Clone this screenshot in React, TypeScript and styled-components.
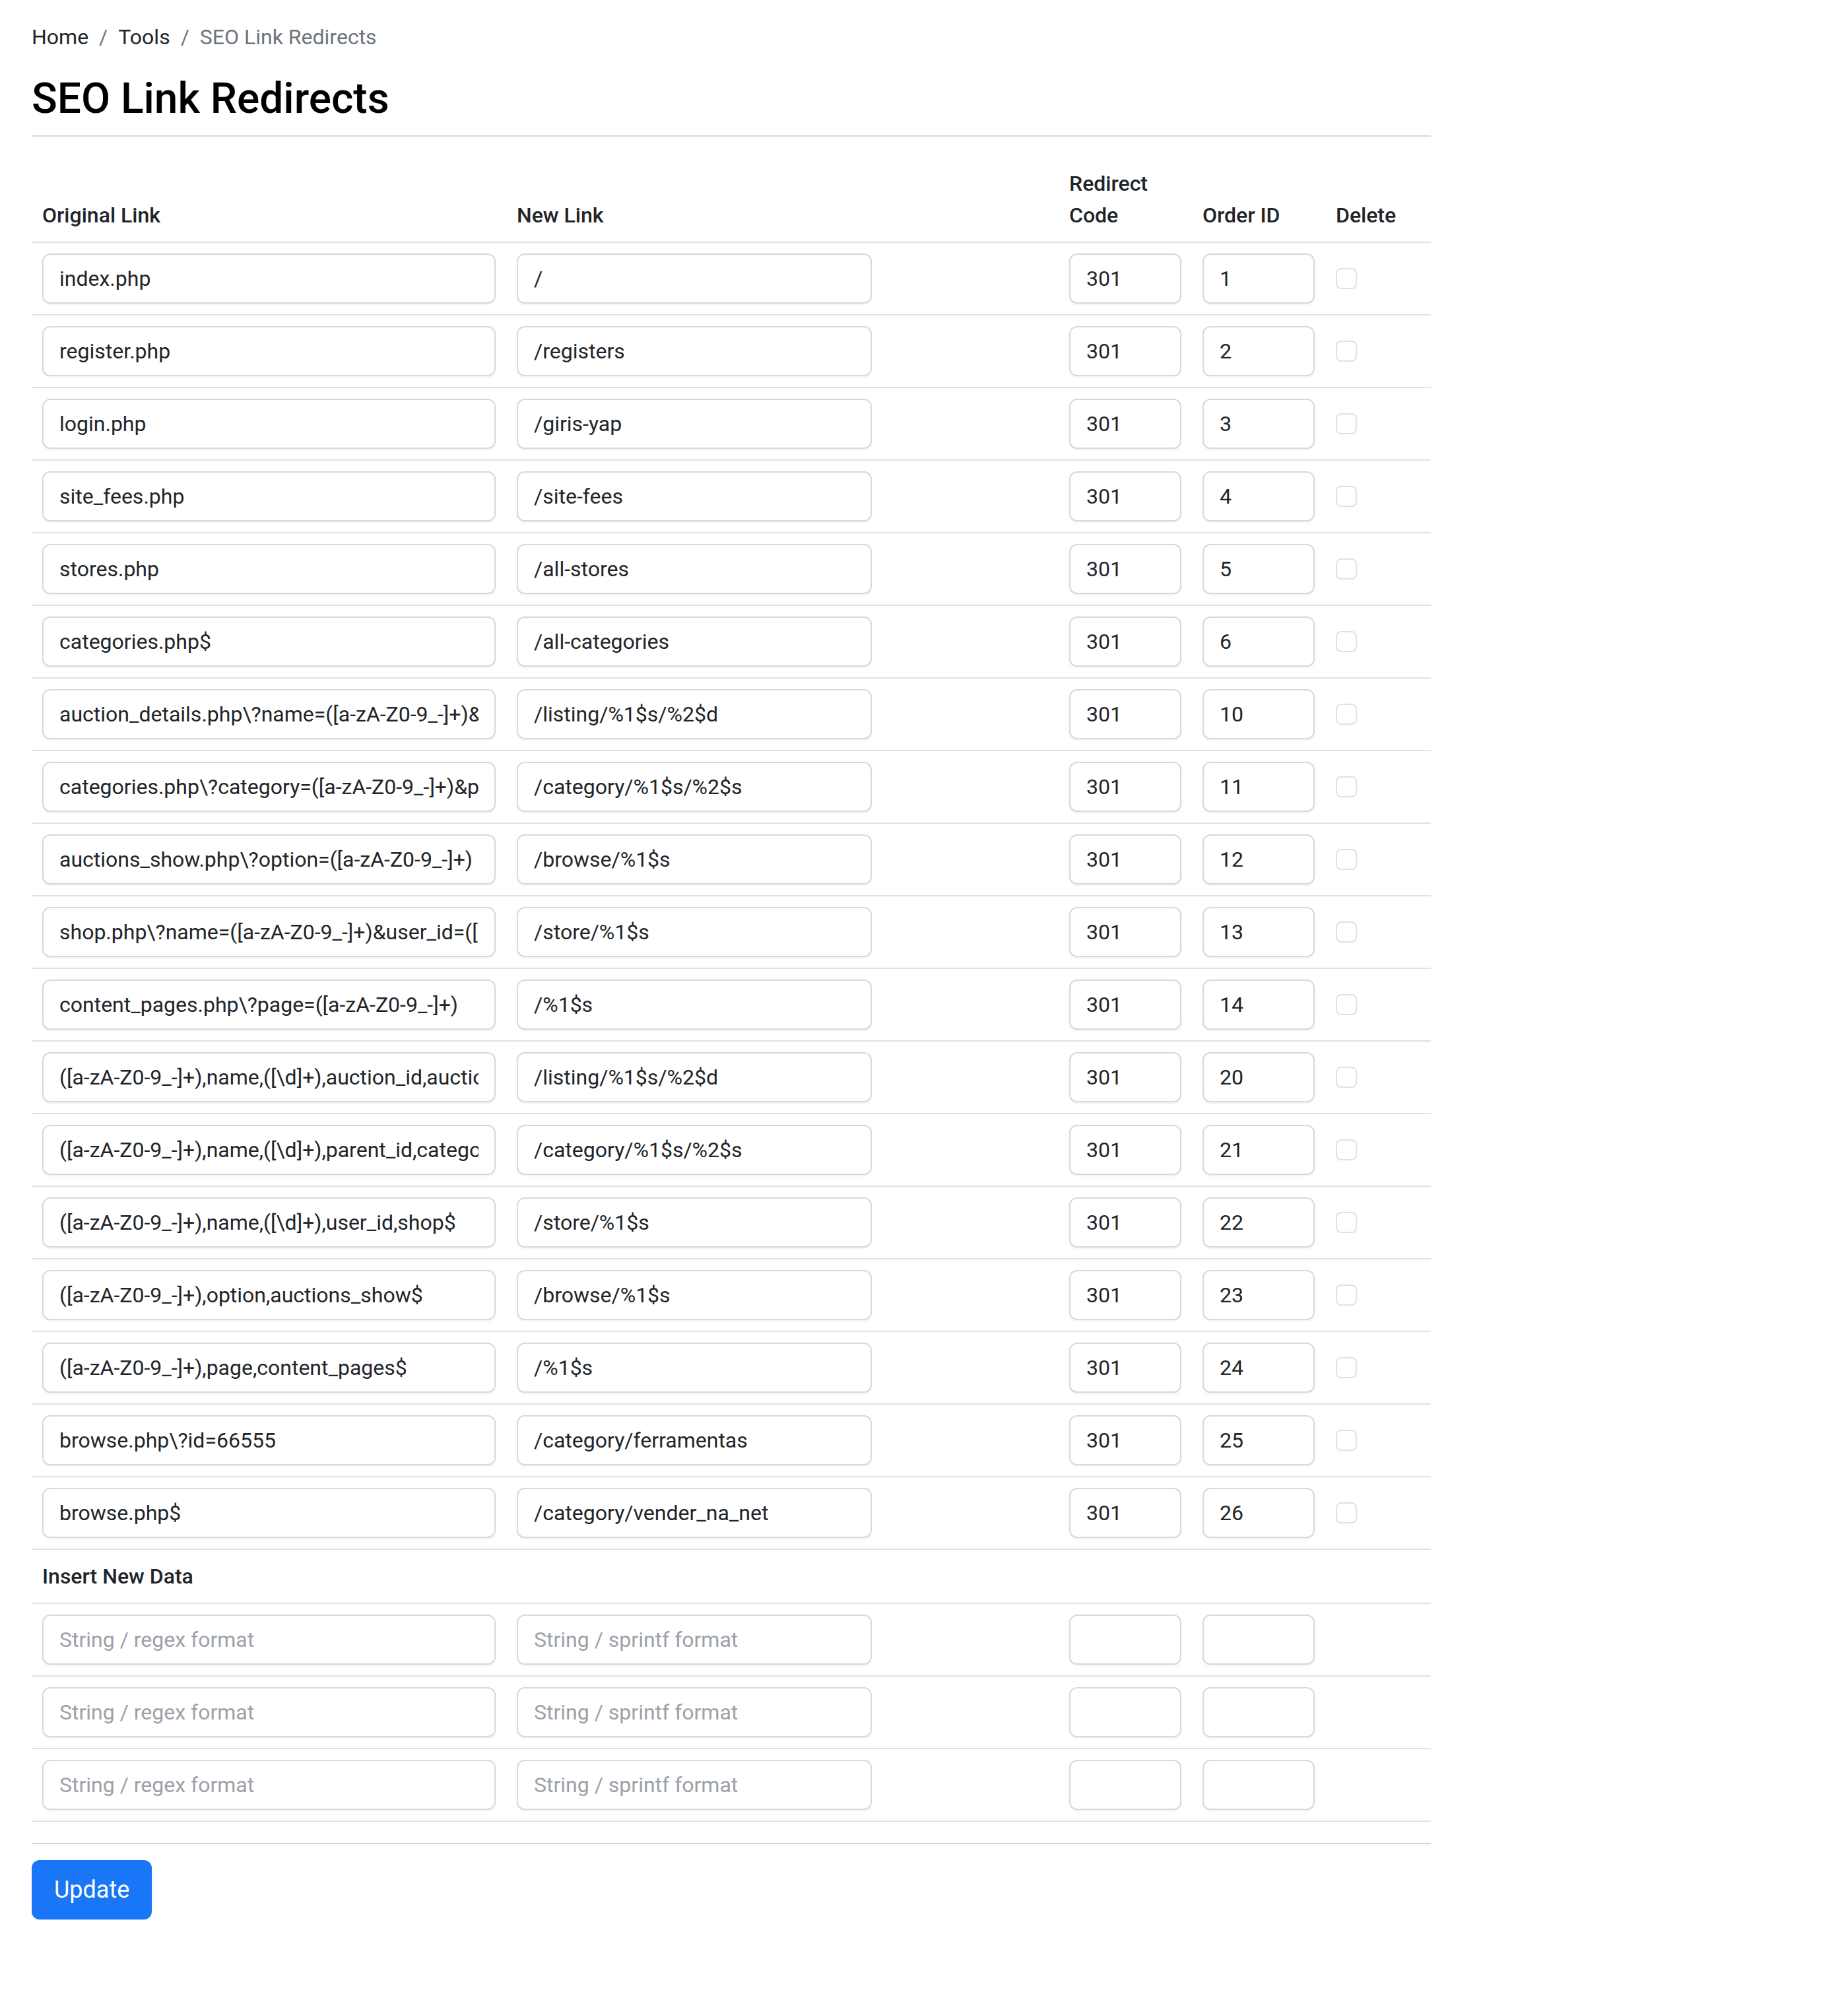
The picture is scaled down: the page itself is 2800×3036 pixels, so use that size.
import React from "react"
import styled, { createGlobalStyle } from "styled-components"

const GlobalStyle = createGlobalStyle`
    html, body {
        margin: 0;
        padding: 0;
        background: #ffffff;
    }

    body {
        font-family: Roboto, "Liberation Sans", sans-serif;
        color: #212529;
    }
`

type Redirect = {
    from: string
    to: string
    code: number
    order: number
}

const redirects: Redirect[] = [
    { from: "index.php", to: "/", code: 301, order: 1 },
    { from: "register.php", to: "/registers", code: 301, order: 2 },
    { from: "login.php", to: "/giris-yap", code: 301, order: 3 },
    { from: "site_fees.php", to: "/site-fees", code: 301, order: 4 },
    { from: "stores.php", to: "/all-stores", code: 301, order: 5 },
    { from: "categories.php$", to: "/all-categories", code: 301, order: 6 },
    { from: "auction_details.php\\?name=([a-zA-Z0-9_-]+)&auction_id=([\\d]+)", to: "/listing/%1$s/%2$d", code: 301, order: 10 },
    { from: "categories.php\\?category=([a-zA-Z0-9_-]+)&parent_id=([\\d]+)", to: "/category/%1$s/%2$s", code: 301, order: 11 },
    { from: "auctions_show.php\\?option=([a-zA-Z0-9_-]+)", to: "/browse/%1$s", code: 301, order: 12 },
    { from: "shop.php\\?name=([a-zA-Z0-9_-]+)&user_id=([\\d]+)", to: "/store/%1$s", code: 301, order: 13 },
    { from: "content_pages.php\\?page=([a-zA-Z0-9_-]+)", to: "/%1$s", code: 301, order: 14 },
    { from: "([a-zA-Z0-9_-]+),name,([\\d]+),auction_id,auction_details$", to: "/listing/%1$s/%2$d", code: 301, order: 20 },
    { from: "([a-zA-Z0-9_-]+),name,([\\d]+),parent_id,categories$", to: "/category/%1$s/%2$s", code: 301, order: 21 },
    { from: "([a-zA-Z0-9_-]+),name,([\\d]+),user_id,shop$", to: "/store/%1$s", code: 301, order: 22 },
    { from: "([a-zA-Z0-9_-]+),option,auctions_show$", to: "/browse/%1$s", code: 301, order: 23 },
    { from: "([a-zA-Z0-9_-]+),page,content_pages$", to: "/%1$s", code: 301, order: 24 },
    { from: "browse.php\\?id=66555", to: "/category/ferramentas", code: 301, order: 25 },
    { from: "browse.php$", to: "/category/vender_na_net", code: 301, order: 26 },
]

const blankRows = [0, 1, 2]

export default function App()
{
    return (
        <Page>
            <GlobalStyle />

            <Breadcrumb>
                <Crumb>Home</Crumb>
                <Crumb>Tools</Crumb>
                <Crumb $active>SEO Link Redirects</Crumb>
            </Breadcrumb>

            <Title>SEO Link Redirects</Title>
            <Rule $after={31} />

            <Table>
                <thead>
                    <tr>
                        <HeadCell $width={719}>Original Link</HeadCell>
                        <HeadCell $width={837}>New Link</HeadCell>
                        <HeadCell $width={202}>Redirect<br />Code</HeadCell>
                        <HeadCell $width={202}>Order ID</HeadCell>
                        <HeadCell $width={160}>Delete</HeadCell>
                    </tr>
                </thead>

                <tbody>
                    {redirects.map(r => (
                        <tr key={r.order}>
                            <Cell><Field type="text" defaultValue={r.from} /></Cell>
                            <Cell><Field type="text" defaultValue={r.to} $width={538} /></Cell>
                            <Cell><Field type="text" defaultValue={String(r.code)} /></Cell>
                            <Cell><Field type="text" defaultValue={String(r.order)} /></Cell>
                            <Cell><Check type="checkbox" /></Cell>
                        </tr>
                    ))}

                    <tr>
                        <LabelCell colSpan={5}>Insert New Data</LabelCell>
                    </tr>

                    {blankRows.map(i => (
                        <tr key={"new" + i}>
                            <Cell><Field type="text" placeholder="String / regex format" /></Cell>
                            <Cell><Field type="text" placeholder="String / sprintf format" $width={538} /></Cell>
                            <Cell><Field type="text" /></Cell>
                            <Cell><Field type="text" /></Cell>
                            <Cell />
                        </tr>
                    ))}
                </tbody>
            </Table>

            <Rule $after={24} />

            <Button type="button">Update</Button>
        </Page>
    )
}

const Page = styled.div`
    width: 2120px;
    padding: 32px 48px 120px;
`

const Breadcrumb = styled.ol`
    display: flex;
    flex-wrap: wrap;
    list-style: none;
    margin: 0 0 32px;
    padding: 0;
    font-size: 32px;
    line-height: 48px;
`

const Crumb = styled.li<{ $active?: boolean }>`
    color: ${p => p.$active ? "#6c757d" : "#212529"};

    &:not(:first-child)::before {
        content: "/";
        padding: 0 16px;
        color: #6c757d;
    }
`

const Title = styled.h2`
    margin: 0 0 16px;
    font-size: 64px;
    font-weight: 500;
    line-height: 1.2;
    color: #000000;
`

const Rule = styled.hr<{ $after: number }>`
    border: 0;
    border-top: 2px solid #d4d7dc;
    margin: 0 0 ${p => p.$after}px;
`

const Table = styled.table`
    width: 100%;
    table-layout: fixed;
    border-collapse: collapse;
    margin: 0 0 32px;
    font-size: 32px;
    line-height: 48px;
`

const HeadCell = styled.th<{ $width: number }>`
    box-sizing: border-box;
    width: ${p => p.$width}px;
    padding: 16px;
    text-align: left;
    vertical-align: bottom;
    font-weight: 500;
    border-bottom: 2px solid #dee2e6;
`

const Cell = styled.td`
    padding: 16px;
    vertical-align: middle;
    border-bottom: 2px solid #dee2e6;
`

const LabelCell = styled(Cell)`
    font-weight: 500;
`

const Field = styled.input<{ $width?: number }>`
    display: block;
    box-sizing: border-box;
    width: ${p => p.$width ? p.$width + "px" : "100%"};
    height: 76px;
    margin: 0;
    padding: 12px 24px;
    border: 2px solid #d6d9de;
    border-radius: 12px;
    box-shadow: 0 2px 3px rgba(0, 0, 0, 0.05);
    background: #ffffff;
    font-family: inherit;
    font-size: 32px;
    line-height: 48px;
    color: #212529;
    outline: none;

    &::placeholder {
        color: #9ca1a9;
    }
`

const Check = styled.input`
    appearance: none;
    display: block;
    width: 32px;
    height: 32px;
    margin: 0;
    border: 2px solid #dee2e6;
    border-radius: 8px;
    background: #ffffff;
`

const Button = styled.button`
    height: 90px;
    padding: 0 34px;
    border: 0;
    border-radius: 12px;
    background: #1976f6;
    color: #ffffff;
    font-family: inherit;
    font-size: 36px;
    cursor: pointer;
`
